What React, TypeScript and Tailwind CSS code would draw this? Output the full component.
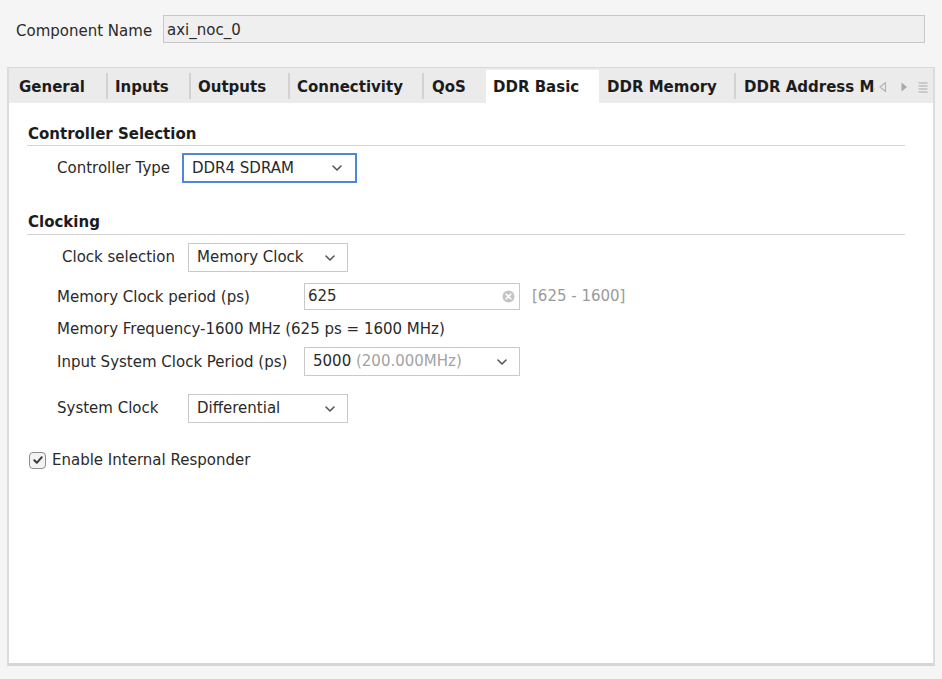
import React from "react";

const Chevron = () => (
  <svg width="12" height="8" viewBox="0 0 12 8" className="shrink-0">
    <path d="M2 2 L6 6 L10 2" fill="none" stroke="#555" strokeWidth="1.6" strokeLinecap="round" strokeLinejoin="round" />
  </svg>
);

const Select = ({
  children,
  className,
  focused,
}: {
  children: React.ReactNode;
  className: string;
  focused?: boolean;
}) => (
  <div
    className={
      "flex items-center justify-between bg-white " +
      (focused ? "border-2 border-[#4f86d6] pl-[8px] pr-[12px] " : "border border-[#c9c9c9] pl-[8px] pr-[11px] ") +
      className
    }
  >
    <span className="whitespace-nowrap">{children}</span>
    <Chevron />
  </div>
);

const Sep = () => <div className="w-[2px] h-[26px] self-center bg-[#d2d2d2] shrink-0" />;

const Tab = ({ label, className, active }: { label: string; className: string; active?: boolean }) => (
  <div
    className={
      "flex items-center whitespace-nowrap overflow-hidden shrink-0 font-bold text-[#1c1c1c] " +
      (active ? "bg-white mt-[2px] h-[33px] pt-[1px] " : "h-[35px] pt-[3px] ") +
      className
    }
  >
    {label}
  </div>
);

export default function App() {
  return (
    <div
      className="w-[942px] h-[679px] bg-[#f5f5f5] flex flex-col text-[15px] text-[#2a2a2a] overflow-hidden"
      style={{ fontFamily: "'DejaVu Sans', 'Noto Sans', sans-serif" }}
    >
      {/* Component name row */}
      <div className="flex items-center mt-[15px] ml-[16px] mr-[17px] h-[28px]">
        <span className="w-[147px] whitespace-nowrap leading-[20px] pt-[3px]">Component Name</span>
        <div className="flex-1 h-[28px] bg-[#efefef] border border-[#c7c7c7] flex items-center pl-[3px] pt-[2px]">
          axi_noc_0
        </div>
      </div>

      {/* Tab panel */}
      <div className="flex-1 mt-[24px] mx-[7px] mb-[13px] flex flex-col border-t border-t-[#d9d9d9] border-x-2 border-x-[#dcdcdc] border-b-[3px] border-b-[#d6d6d6]">
        {/* Tab bar */}
        <div className="h-[35px] bg-[#ebebeb] flex items-start">
          <Tab label="General" className="w-[97px] pl-[10px]" />
          <Sep />
          <Tab label="Inputs" className="w-[81px] pl-[7px]" />
          <Sep />
          <Tab label="Outputs" className="w-[97px] pl-[7px]" />
          <Sep />
          <Tab label="Connectivity" className="w-[132px] pl-[7px]" />
          <Sep />
          <Tab label="QoS" className="w-[62px] pl-[8px]" />
          <Tab label="DDR Basic" className="w-[113px] pl-[7px]" active />
          <Tab label="DDR Memory" className="w-[135px] pl-[8px]" />
          <Sep />
          <Tab label="DDR Address Map" className="w-[139px] pl-[8px]" />
          <div className="flex items-center h-[35px] pt-[2px]">
            <svg width="12" height="14" viewBox="0 0 12 14" className="ml-[2px]">
              <path d="M8.5 2.5 L3 7 L8.5 11.5 Z" fill="none" stroke="#b4b4b4" strokeWidth="1.2" strokeLinejoin="round" />
            </svg>
            <svg width="12" height="14" viewBox="0 0 12 14" className="ml-[9px]">
              <path d="M3.5 2.5 L9 7 L3.5 11.5 Z" fill="#a8a8a8" />
            </svg>
            <svg width="12" height="14" viewBox="0 0 12 14" className="ml-[7px]">
              <path d="M1.5 3 H10.5 M1.5 6 H10.5 M1.5 9 H10.5 M1.5 12 H10.5" stroke="#aaaaaa" strokeWidth="1.2" />
            </svg>
          </div>
        </div>

        {/* Content */}
        <div className="flex-1 bg-white flex flex-col">
          {/* Controller Selection */}
          <div className="mt-[22px] ml-[18px] mr-[28px] pl-[1px] pb-[2px] border-b border-[#d4d4d4] font-bold leading-[18px] text-[#1c1c1c]">
            Controller Selection
          </div>
          <div className="flex items-center mt-[7px] ml-[48px] h-[30px]">
            <span className="w-[125px] whitespace-nowrap pt-[1px]">Controller Type</span>
            <Select className="w-[175px] h-[30px]" focused>
              DDR4 SDRAM
            </Select>
          </div>

          {/* Clocking */}
          <div className="mt-[30px] ml-[18px] mr-[28px] pl-[1px] pb-[3px] border-b border-[#d4d4d4] font-bold leading-[18px] text-[#1c1c1c]">
            Clocking
          </div>
          <div className="flex items-center mt-[8px] ml-[53px] h-[29px]">
            <span className="w-[126px] whitespace-nowrap">Clock selection</span>
            <Select className="w-[160px] h-[29px]">Memory Clock</Select>
          </div>

          <div className="flex items-center mt-[11px] ml-[48px] h-[27px]">
            <span className="w-[247px] whitespace-nowrap pt-[1px]">Memory Clock period (ps)</span>
            <div className="w-[216px] h-[27px] border border-[#c9c9c9] bg-white flex items-center justify-between pl-[3px] pr-[4px]">
              <span>625</span>
              <svg width="13" height="13" viewBox="0 0 13 13">
                <circle cx="6.5" cy="6.5" r="6" fill="#c4c4c4" />
                <path d="M4.2 4.2 L8.8 8.8 M8.8 4.2 L4.2 8.8" stroke="#fff" strokeWidth="1.6" strokeLinecap="round" />
              </svg>
            </div>
            <span className="ml-[12px] text-[#9a9a9a] whitespace-nowrap">[625 - 1600]</span>
          </div>

          <div className="mt-[9px] ml-[48px] h-[20px] leading-[20px] whitespace-nowrap">
            Memory Frequency-1600 MHz (625 ps = 1600 MHz)
          </div>

          <div className="flex items-center mt-[8px] ml-[48px] h-[29px]">
            <span className="w-[247px] whitespace-nowrap pt-[1px]">Input System Clock Period (ps)</span>
            <Select className="w-[216px] h-[29px]">
              5000 <span className="text-[#a3a3a3]">(200.000MHz)</span>
            </Select>
          </div>

          <div className="flex items-center mt-[18px] ml-[48px] h-[29px]">
            <span className="w-[131px] whitespace-nowrap">System Clock</span>
            <Select className="w-[160px] h-[29px]">Differential</Select>
          </div>

          <div className="flex items-center mt-[29px] ml-[20px] h-[16px]">
            <div className="w-[17px] h-[17px] rounded-[4px] border border-[#8c8c8c] bg-[#f3f3f3] flex items-center justify-center">
              <svg width="12" height="12" viewBox="0 0 12 12">
                <path d="M2.3 6.3 L4.8 8.8 L9.8 3.2" fill="none" stroke="#3a3a3a" strokeWidth="2" strokeLinecap="round" strokeLinejoin="round" />
              </svg>
            </div>
            <span className="ml-[6px] whitespace-nowrap leading-[20px]">Enable Internal Responder</span>
          </div>
        </div>
      </div>
    </div>
  );
}
